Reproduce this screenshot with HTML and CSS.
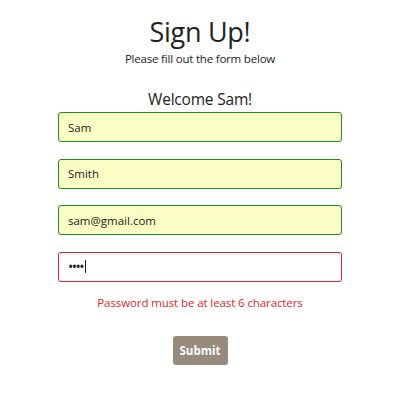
FILE: index.html
```html
<!DOCTYPE html>
<html>
<head>
<meta charset="utf-8">
<link rel="stylesheet" href="styles.css">
</head>
<body>
<div class="page">
  <h1 class="title">Sign Up!</h1>
  <p class="subtitle">Please fill out the form below</p>
  <h2 class="welcome">Welcome Sam!</h2>
  <form class="form">
    <input class="field valid" type="text" value="Sam">
    <input class="field valid" type="text" value="Smith">
    <input class="field valid" type="text" value="sam@gmail.com">
    <div class="field invalid"><span class="dots">••••</span><span class="caret"></span></div>
    <p class="error">Password must be at least 6 characters</p>
    <button class="submit" type="button">Submit</button>
  </form>
</div>
</body>
</html>
```
FILE: styles.css
```css
html, body {
  margin: 0;
  padding: 0;
  background: #fff;
}
body {
  font-family: "Open Sans", "Noto Sans", sans-serif;
  color: #222;
}
.page {
  display: flex;
  flex-direction: column;
  align-items: center;
  padding-top: 14px;
}
.title {
  margin: 0;
  font-size: 27px;
  font-weight: 400;
  line-height: 36px;
  letter-spacing: -0.3px;
}
.subtitle {
  margin: 1px 0 0;
  font-size: 11.5px;
  line-height: 16px;
  letter-spacing: -0.2px;
}
.welcome {
  margin: 21px 0 0;
  font-size: 15.5px;
  font-weight: 400;
  line-height: 22px;
  letter-spacing: -0.2px;
}
.form {
  display: flex;
  flex-direction: column;
  align-items: center;
  margin-top: 2px;
  width: 284px;
}
.field {
  box-sizing: border-box;
  width: 284px;
  height: 30px;
  margin: 0 0 16.5px;
  padding: 0 9px;
  border-radius: 3px;
  font-family: inherit;
  font-size: 11.5px;
  color: #222;
  outline: none;
  display: flex;
  align-items: center;
}
.valid {
  background: #fafec4;
  border: 1.5px solid #1f8f1f;
}
.invalid {
  background: #fff;
  border: 1.5px solid #e0202a;
}
.dots {
  font-size: 14px;
  letter-spacing: -1.5px;
}
.caret {
  display: inline-block;
  width: 1px;
  height: 13px;
  background: #222;
  margin-left: 2px;
}
.error {
  margin: -3px 0 0;
  font-size: 11.5px;
  line-height: 16px;
  color: #e8232a;
  letter-spacing: -0.1px;
}
.submit {
  margin-top: 25px;
  width: 55px;
  height: 29px;
  border: none;
  border-radius: 3px;
  background: #978b7e;
  color: #fff;
  font-family: inherit;
  font-weight: 700;
  font-size: 11.5px;
  padding: 0;
}
```
